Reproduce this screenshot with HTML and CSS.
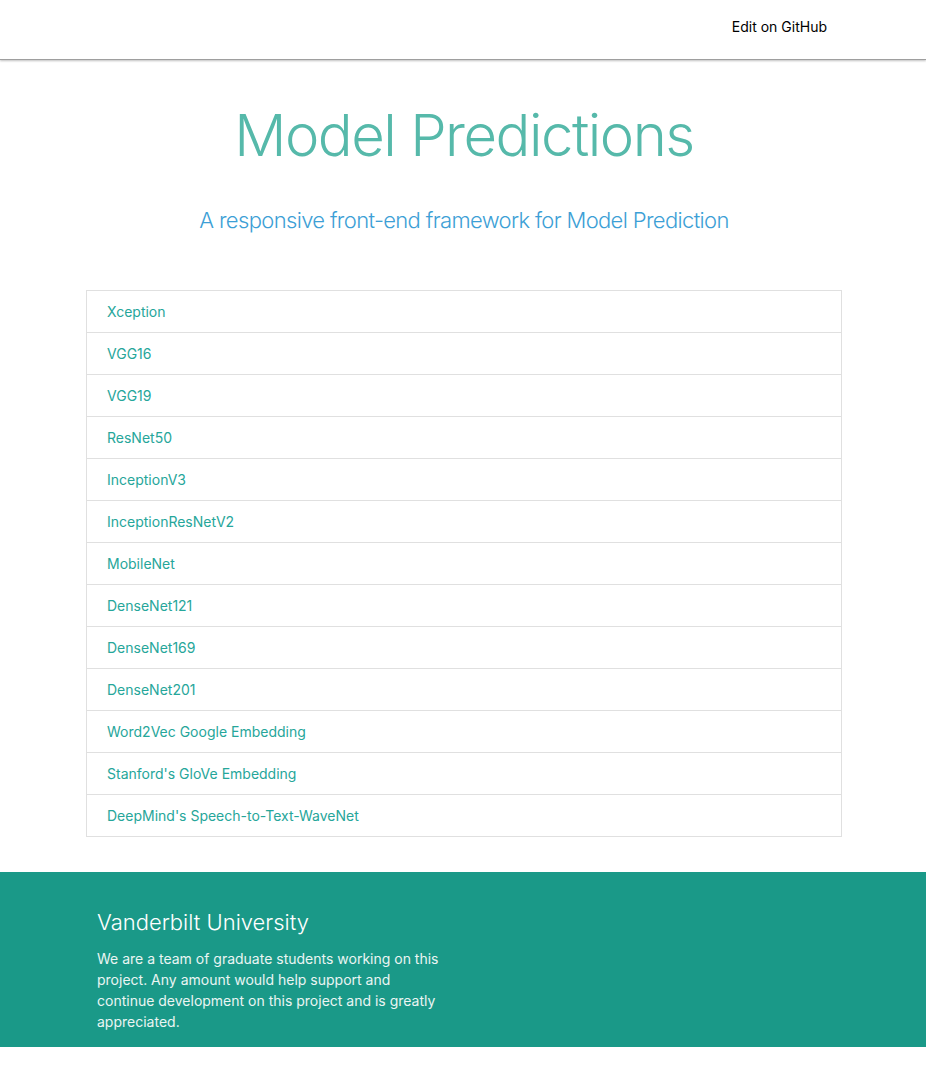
FILE: index.html
```html
<!DOCTYPE html>
<html lang="en">
<head>
<meta charset="utf-8">
<title>Model Predictions</title>
<link rel="stylesheet" href="styles.css">
</head>
<body>
<header class="navbar">
  <a class="nav-link" href="#">Edit on GitHub</a>
</header>
<main class="main">
  <section class="hero">
    <h1 class="title">Model Predictions</h1>
    <p class="subtitle">A responsive front-end framework for Model Prediction</p>
  </section>
  <ul class="model-list">
    <li class="model-item"><a href="#">Xception</a></li>
    <li class="model-item"><a href="#">VGG16</a></li>
    <li class="model-item"><a href="#">VGG19</a></li>
    <li class="model-item"><a href="#">ResNet50</a></li>
    <li class="model-item"><a href="#">InceptionV3</a></li>
    <li class="model-item"><a href="#">InceptionResNetV2</a></li>
    <li class="model-item"><a href="#">MobileNet</a></li>
    <li class="model-item"><a href="#">DenseNet121</a></li>
    <li class="model-item"><a href="#">DenseNet169</a></li>
    <li class="model-item"><a href="#">DenseNet201</a></li>
    <li class="model-item"><a href="#">Word2Vec Google Embedding</a></li>
    <li class="model-item"><a href="#">Stanford's GloVe Embedding</a></li>
    <li class="model-item"><a href="#">DeepMind's Speech-to-Text-WaveNet</a></li>
  </ul>
</main>
<footer class="footer">
  <div class="footer-inner">
    <h5 class="footer-title">Vanderbilt University</h5>
    <p class="footer-text">We are a team of graduate students working on this project. Any amount would help support and continue development on this project and is greatly appreciated.</p>
  </div>
</footer>
</body>
</html>
```

FILE: styles.css
```css
html, body {
  margin: 0;
  padding: 0;
  background: #ffffff;
  font-family: Inter, "Noto Sans", sans-serif;
}

.navbar {
  height: 59px;
  display: flex;
  justify-content: flex-end;
  align-items: center;
  padding-right: 99px;
  border-bottom: 1px solid #9e9e9e;
  box-shadow: 0 1px 2px rgba(0,0,0,0.25);
}

.nav-link {
  color: #000;
  text-decoration: none;
  font-size: 14px;
  margin-top: -6px;
}

.main {
  width: 756px;
  margin: 0 auto;
  padding: 40px 0 0 2px;
}

.hero {
  text-align: center;
}

.title {
  margin: 0;
  font-weight: 300;
  font-size: 58px;
  line-height: 70px;
  color: #56b9aa;
  letter-spacing: -1.5px;
}

.subtitle {
  margin: 35px 0 0;
  font-weight: 300;
  font-size: 22px;
  line-height: 30px;
  color: #3d9fd6;
  letter-spacing: -0.65px;
}

.model-list {
  list-style: none;
  margin: 55px 0 0;
  padding: 0;
  border: 1px solid #e0e0e0;
}

.model-item {
  height: 41px;
  display: flex;
  align-items: center;
  padding-left: 20px;
  border-bottom: 1px solid #e0e0e0;
}

.model-item:last-child {
  border-bottom: none;
}

.model-item a {
  color: #26a69a;
  text-decoration: none;
  font-size: 14px;
}

.footer {
  margin-top: 35px;
  margin-bottom: 30px;
  background: #1a9988;
  color: #fff;
}

.footer-inner {
  width: 756px;
  margin: 0 auto;
  padding: 36px 0 15px 12px;
  box-sizing: border-box;
}

.footer-title {
  margin: 0;
  font-size: 22px;
  font-weight: 300;
  line-height: 28px;
}

.footer-text {
  margin: 12px 0 0;
  width: 350px;
  font-size: 14px;
  line-height: 21px;
  color: #eaf5f3;
}
```
